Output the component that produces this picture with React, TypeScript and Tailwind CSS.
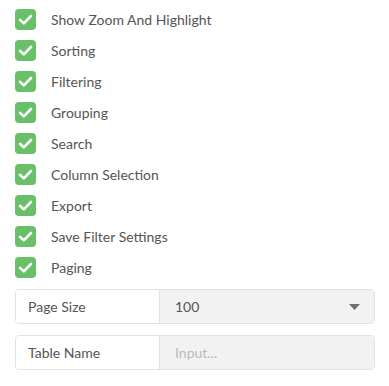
import React from 'react';

const options = [
  'Show Zoom And Highlight',
  'Sorting',
  'Filtering',
  'Grouping',
  'Search',
  'Column Selection',
  'Export',
  'Save Filter Settings',
  'Paging',
];

const CheckIcon = () => (
  <svg width="15" height="15" viewBox="0 0 15 15" fill="none">
    <path d="M2 7.8 L5.8 11.4 L13 4" stroke="white" strokeWidth="2.6" strokeLinecap="round" strokeLinejoin="round" />
  </svg>
);

const App: React.FC = () => {
  return (
    <div className="w-[389px] h-[386px] bg-white px-[15px] pt-[9px] font-['Lato',sans-serif] text-[14px] text-[#555]">
      <div className="flex flex-col gap-[10px]">
        {options.map((label) => (
          <label key={label} className="flex items-center h-[21px]">
            <span className="w-[21px] h-[21px] rounded-[4px] bg-[#6abf69] flex items-center justify-center">
              <CheckIcon />
            </span>
            <span className="ml-[15px]">{label}</span>
          </label>
        ))}
      </div>

      <div className="mt-[11px] flex flex-col gap-[11px] w-[360px]">
        <div className="flex h-[35px] border border-[#e3e3e3] rounded-[4px] overflow-hidden">
          <div className="w-[144px] border-r border-[#e3e3e3] flex items-center pl-[12px] bg-white">Page Size</div>
          <div className="flex-1 bg-[#f2f2f2] flex items-center justify-between pl-[15px] pr-[14px]">
            <span>100</span>
            <svg width="11" height="6" viewBox="0 0 11 6">
              <path d="M0 0 H11 L5.5 6 Z" fill="#707070" />
            </svg>
          </div>
        </div>
        <div className="flex h-[35px] border border-[#e3e3e3] rounded-[4px] overflow-hidden">
          <div className="w-[144px] border-r border-[#e3e3e3] flex items-center pl-[12px] bg-white">Table Name</div>
          <input
            placeholder="Input..."
            className="flex-1 bg-[#f2f2f2] pl-[15px] outline-none placeholder:text-[#bbb] text-[14px]"
          />
        </div>
      </div>
    </div>
  );
};

export default App;
